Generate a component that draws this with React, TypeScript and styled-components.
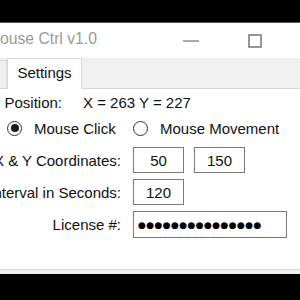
import React from "react";
import styled, { createGlobalStyle } from "styled-components";

const Global = createGlobalStyle`
  html, body { margin: 0; padding: 0; background: #000; overflow: hidden; }
  body { font-family: "Liberation Sans", Arial, sans-serif; }
`;

const Screen = styled.div`
  width: 300px;
  height: 300px;
  overflow: hidden;
  background: #000;
`;

const Window = styled.div`
  margin-top: 22px;
  margin-left: -60px;
  width: 411px;
  background: #f0f0f0;
  border-top: 1px solid #5a5a5a;
  padding-bottom: 4px;
  display: flex;
  flex-direction: column;
`;

const TitleBar = styled.div`
  height: 35px;
  background: #fff;
  display: flex;
  align-items: center;
`;

const Title = styled.div`
  flex: 1;
  padding-left: 47px;
  padding-bottom: 3px;
  font-size: 15.7px;
  color: #9a9a9a;
  white-space: nowrap;
`;

const CaptionButton = styled.div`
  width: 64px;
  height: 35px;
  display: flex;
  align-items: center;
  justify-content: center;
  color: #777;
`;

const TabHeader = styled.div`
  height: 30px;
  display: flex;
  align-items: flex-end;
  padding-left: 10px;
  background: #f0f0f0;
`;

const Tab = styled.div<{ $active?: boolean; $width: number }>`
  box-sizing: border-box;
  width: ${(p) => p.$width}px;
  height: ${(p) => (p.$active ? 31 : 28)}px;
  margin-bottom: ${(p) => (p.$active ? -1 : 0)}px;
  background: ${(p) => (p.$active ? "#fff" : "#f0f0f0")};
  border: 1px solid #d9d9d9;
  border-bottom: none;
  position: relative;
  z-index: ${(p) => (p.$active ? 1 : 0)};
  display: flex;
  align-items: center;
  justify-content: center;
  padding-bottom: 3px;
  font-size: 15px;
  color: #111;
  white-space: nowrap;
`;

const TabPage = styled.div`
  box-sizing: border-box;
  height: 182px;
  background: #fff;
  border: 1px solid #d9d9d9;
  display: flex;
  flex-direction: column;
`;

const Row = styled.div<{ $top?: number; $height?: number }>`
  display: flex;
  align-items: center;
  height: ${(p) => p.$height ?? 26}px;
  margin-top: ${(p) => p.$top ?? 0}px;
  font-size: 15px;
  color: #111;
  white-space: nowrap;
`;

const Label = styled.div<{ $width?: number }>`
  width: ${(p) => p.$width ?? 180}px;
  flex: none;
  text-align: right;
  margin-right: ${(p) => (p.$width ? 21 : 12)}px;
`;

const RadioGroup = styled.div`
  display: grid;
  grid-template-columns: 126px auto;
  padding-left: 66px;
  align-items: center;
`;

const RadioOption = styled.label`
  display: flex;
  align-items: center;
  gap: 12px;
`;

const RadioCircle = styled.span<{ $checked?: boolean }>`
  box-sizing: border-box;
  width: 15px;
  height: 15px;
  border-radius: 50%;
  border: 1px solid #333;
  background: #fff;
  display: flex;
  align-items: center;
  justify-content: center;
  &::after {
    content: "";
    display: ${(p) => (p.$checked ? "block" : "none")};
    width: 8px;
    height: 8px;
    border-radius: 50%;
    background: #1a1a1a;
  }
`;

const Field = styled.input<{ $width: number }>`
  box-sizing: border-box;
  width: ${(p) => p.$width}px;
  height: 26px;
  margin: 0 10px 0 0;
  padding: 0;
  border: 1px solid #7a7a7a;
  background: #fff;
  font-family: "Liberation Sans", Arial, sans-serif;
  font-size: 15px;
  color: #111;
  text-align: center;
  outline: none;
`;

const MaskedField = styled.div`
  box-sizing: border-box;
  width: 154px;
  height: 27px;
  border: 1px solid #7a7a7a;
  background: #fff;
  display: flex;
  align-items: center;
  padding-left: 4px;
  font-family: "DejaVu Sans", sans-serif;
  font-size: 9px;
  letter-spacing: 0.4px;
  color: #000;
`;

export default function App() {
  return (
    <>
      <Global />
      <Screen>
        <Window>
          <TitleBar>
            <Title>Mouse Ctrl v1.0</Title>
            <CaptionButton>
              <svg width="16" height="2" viewBox="0 0 16 2">
                <line x1="0" y1="1" x2="16" y2="1" stroke="#6f6f6f" strokeWidth="1.2" />
              </svg>
            </CaptionButton>
            <CaptionButton>
              <svg width="14" height="14" viewBox="0 0 14 14">
                <rect x="1" y="1" width="12" height="12" fill="none" stroke="#7d7d7d" strokeWidth="1.6" />
              </svg>
            </CaptionButton>
            <CaptionButton>
              <svg width="14" height="14" viewBox="0 0 14 14">
                <path d="M1 1 L13 13 M13 1 L1 13" stroke="#6f6f6f" strokeWidth="1.2" />
              </svg>
            </CaptionButton>
          </TitleBar>
          <TabHeader>
            <Tab $width={57}>Main</Tab>
            <Tab $active $width={75}>Settings</Tab>
          </TabHeader>
          <TabPage>
            <Row>
              <Label $width={121}>Cursor Position:</Label>
              <span>X = 263 Y = 227</span>
            </Row>
            <Row>
              <RadioGroup>
                <RadioOption>
                  <RadioCircle $checked />
                  Mouse Click
                </RadioOption>
                <RadioOption>
                  <RadioCircle />
                  Mouse Movement
                </RadioOption>
              </RadioGroup>
            </Row>
            <Row $top={6}>
              <Label>X &amp; Y Coordinates:</Label>
              <Field $width={51} value="50" readOnly />
              <Field $width={51} value="150" readOnly />
            </Row>
            <Row $top={6}>
              <Label>Interval in Seconds:</Label>
              <Field $width={51} value="120" readOnly />
            </Row>
            <Row $top={6} $height={27}>
              <Label>License #:</Label>
              <MaskedField>●●●●●●●●●●●●●●●</MaskedField>
            </Row>
          </TabPage>
        </Window>
      </Screen>
    </>
  );
}
